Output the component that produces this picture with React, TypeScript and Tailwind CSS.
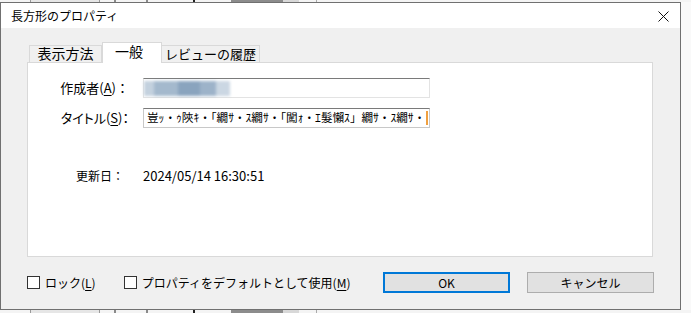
import React from 'react';

const font = "font-['Noto_Sans_CJK_JP','Noto_Sans',sans-serif]";

// Scraps of the window lying behind the dialog
const Backdrop: React.FC<{ className?: string }> = ({ className }) => (
  <div className={`flex items-stretch bg-[#f4f4f4] ${className ?? ''}`}>
    <div className="w-[30px]" />
    <div className="w-[70px] border-x border-[#9a9a9a] bg-[#e6e6e6]" />
    <div className="w-[14px]" />
    <div className="w-[2px] bg-[#8a8a8a]" />
    <div className="w-[30px]" />
    <div className="w-[2px] bg-[#8a8a8a]" />
    <div className="w-[45px]" />
    <div className="w-[2px] bg-[#222]" />
    <div className="w-[36px]" />
    <div className="w-[52px] bg-[#8c8c8c]" />
    <div className="w-[16px] bg-[#d8d8d8]" />
    <div className="w-[18px] border-r border-[#aaa]" />
    <div className="flex-1" />
  </div>
);

const Ul: React.FC<{ children: React.ReactNode }> = ({ children }) => (
  <span className="underline underline-offset-2">{children}</span>
);

const Checkbox: React.FC<{ children: React.ReactNode }> = ({ children }) => (
  <div className="flex items-center gap-[5px]">
    <div className="w-[13px] h-[13px] border border-[#333] bg-white" />
    <span className="text-[12px] leading-none">{children}</span>
  </div>
);

export default function App() {
  return (
    <div className={`w-[691px] h-[313px] flex flex-col overflow-hidden bg-[#f7f7f7] text-black ${font}`}>
      <Backdrop className="h-[2px]" />
      <div className="flex">
        <div className="w-[681px] h-[308px] border border-[#707070] flex flex-col bg-[#f0f0f0]">
          {/* Title bar */}
          <div className="h-[25px] bg-white flex items-center justify-between pl-[10px] pr-[11px]">
            <span className="text-[12px]">長方形のプロパティ</span>
            <svg width="11" height="11" viewBox="0 0 11 11" className="mt-[1px]">
              <path d="M0.5 0.5 L10.5 10.5 M10.5 0.5 L0.5 10.5" stroke="#111" strokeWidth="1" fill="none" />
            </svg>
          </div>

          {/* Body */}
          <div className="flex-1 flex flex-col pl-[26px] pt-[14px]">
            {/* Tabs */}
            <div className="flex items-end h-[20px] pl-[2px] relative z-10">
              <div className="h-[17px] w-[73px] border border-b-0 border-[#d9d9d9] bg-[#f0f0f0] flex items-center justify-center pb-[2px] text-[14px] leading-none">
                表示方法
              </div>
              <div className="h-[21px] w-[60px] -mb-[1px] border border-b-0 border-[#d9d9d9] bg-white flex items-start justify-center pr-[6px] pt-[1px] text-[14px] leading-none">
                一般
              </div>
              <div className="h-[17px] w-[98px] border border-b-0 border-l-0 border-[#d9d9d9] bg-[#f0f0f0] flex items-center justify-center pb-[2px] text-[13px] leading-none">
                レビューの履歴
              </div>
            </div>

            {/* Panel */}
            <div className="w-[626px] h-[195px] border border-[#d9d9d9] bg-white flex flex-col pt-[15px]">
              <div className="flex items-center h-[20px]">
                <div className="w-[105px] text-right text-[13px] pr-[4px]">
                  作成者(<Ul>A</Ul>)：
                </div>
                <div className="ml-[10px] w-[287px] h-[20px] border border-[#e3e3e3] border-t-[#7a7a7a] bg-white flex items-center">
                  <div className="flex blur-[1.5px]">
                    <div className="w-[10px] h-[15px] bg-[#c3d1de]" />
                    <div className="w-[24px] h-[15px] bg-[#a4b9cd]" />
                    <div className="w-[22px] h-[15px] bg-[#8aa4be]" />
                    <div className="w-[16px] h-[15px] bg-[#9db3c9]" />
                    <div className="w-[14px] h-[15px] bg-[#cbd7e3]" />
                  </div>
                </div>
              </div>
              <div className="flex items-center h-[20px] mt-[10px]">
                <div className="w-[105px] text-right text-[13px] pr-[4px] [font-feature-settings:'palt']">
                  タイトル(<Ul>S</Ul>)：
                </div>
                <div className="ml-[10px] w-[287px] h-[20px] border border-[#c8c8c8] border-t-[#7a7a7a] bg-white flex items-center pl-[3px] overflow-hidden">
                  <span className="text-[11.6px] whitespace-nowrap leading-none">豈ｯ・ｩ陝ｷ・「繝ｻ・ｽ繝ｻ・「闖ｫ・ｴ髮懶ｽ」繝ｻ・ｽ繝ｻ・</span>
                  <div className="ml-[1px] w-[2px] h-[14px] bg-[#f0a040]" />
                </div>
              </div>
              <div className="flex items-center mt-[38px]">
                <div className="w-[105px] text-right text-[12px] pr-[9px]">更新日：</div>
                <div className="ml-[10px] text-[13px]">2024/05/14 16:30:51</div>
              </div>
            </div>

            {/* Footer */}
            <div className="flex items-center mt-[15px] pr-[26px]">
              <div className="flex items-center gap-[28px]">
                <Checkbox>
                  ロック(<Ul>L</Ul>)
                </Checkbox>
                <Checkbox>
                  プロパティをデフォルトとして使用(<Ul>M</Ul>)
                </Checkbox>
              </div>
              <div className="ml-auto flex gap-[17px]">
                <button className="w-[127px] h-[21px] border-2 border-[#0078d7] bg-[#e1e1e1] text-[12px] leading-none">
                  OK
                </button>
                <button className="w-[127px] h-[21px] border border-[#adadad] bg-[#e1e1e1] text-[12px] leading-none">
                  キャンセル
                </button>
              </div>
            </div>
          </div>
        </div>
        <div className="flex-1 bg-[#f9f9f9]" />
      </div>
      <Backdrop className="h-[3px]" />
    </div>
  );
}
